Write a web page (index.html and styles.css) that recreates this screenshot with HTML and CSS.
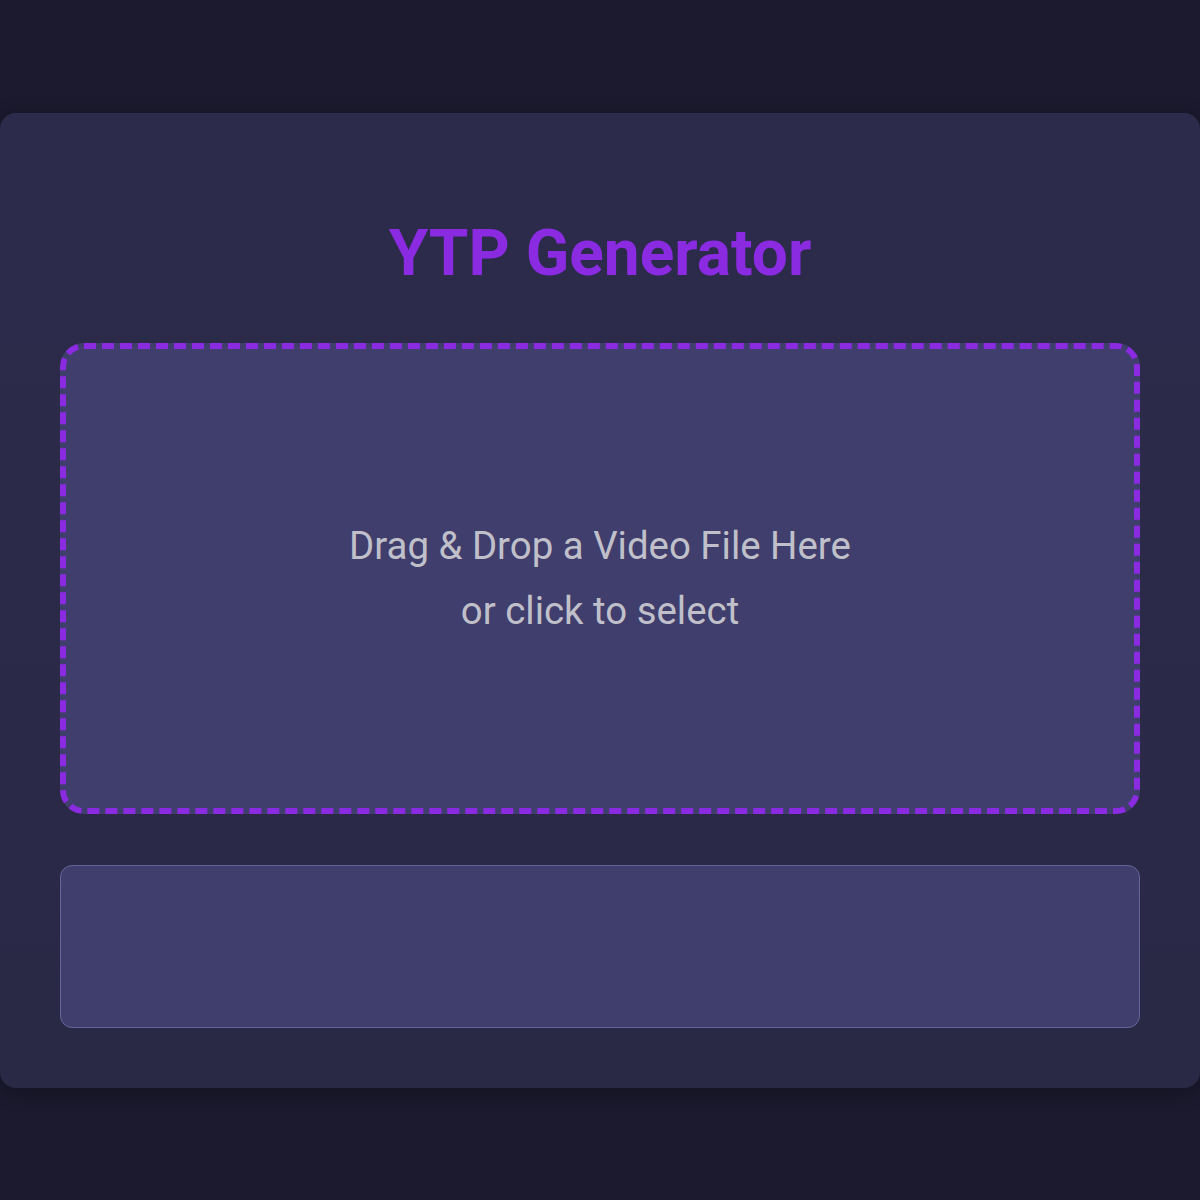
FILE: index.html
```html
<!DOCTYPE html>
<html lang="en">
<head>
<meta charset="UTF-8">
<title>YTP Generator</title>
<link rel="stylesheet" href="styles.css">
</head>
<body>
<main class="card">
  <h1 class="title">YTP Generator</h1>
  <div class="dropzone">
    <p class="drop-text">Drag &amp; Drop a Video File Here<br>or click to select</p>
  </div>
  <div class="output"></div>
</main>
</body>
</html>
```

FILE: styles.css
```css
html, body {
  margin: 0;
  padding: 0;
}
body {
  background: #1b1a2e;
  font-family: Roboto, "Liberation Sans", sans-serif;
  min-height: 100vh;
  display: flex;
  align-items: center;
  justify-content: center;
}
.card {
  width: 1200px;
  box-sizing: border-box;
  padding: 60px;
  background: linear-gradient(180deg, #2d2b4b 0%, #292845 100%);
  border-radius: 16px;
  box-shadow: 0 4px 20px rgba(0,0,0,0.3);
}
.title {
  margin: 43px 0 52px;
  font-size: 64px;
  font-weight: 700;
  color: #8a2be2;
  text-align: center;
}
.dropzone {
  height: 471px;
  box-sizing: border-box;
  border: 6px dashed #8a2be2;
  border-radius: 24px;
  background: #403e6c;
  display: flex;
  align-items: center;
  justify-content: center;
}
.drop-text {
  margin: 0;
  font-size: 38.4px;
  line-height: 65px;
  color: #c0c0ca;
  text-align: center;
}
.output {
  margin-top: 51px;
  height: 163px;
  box-sizing: border-box;
  border: 1px solid #66639a;
  border-radius: 12px;
  background: #403e6c;
}
```
